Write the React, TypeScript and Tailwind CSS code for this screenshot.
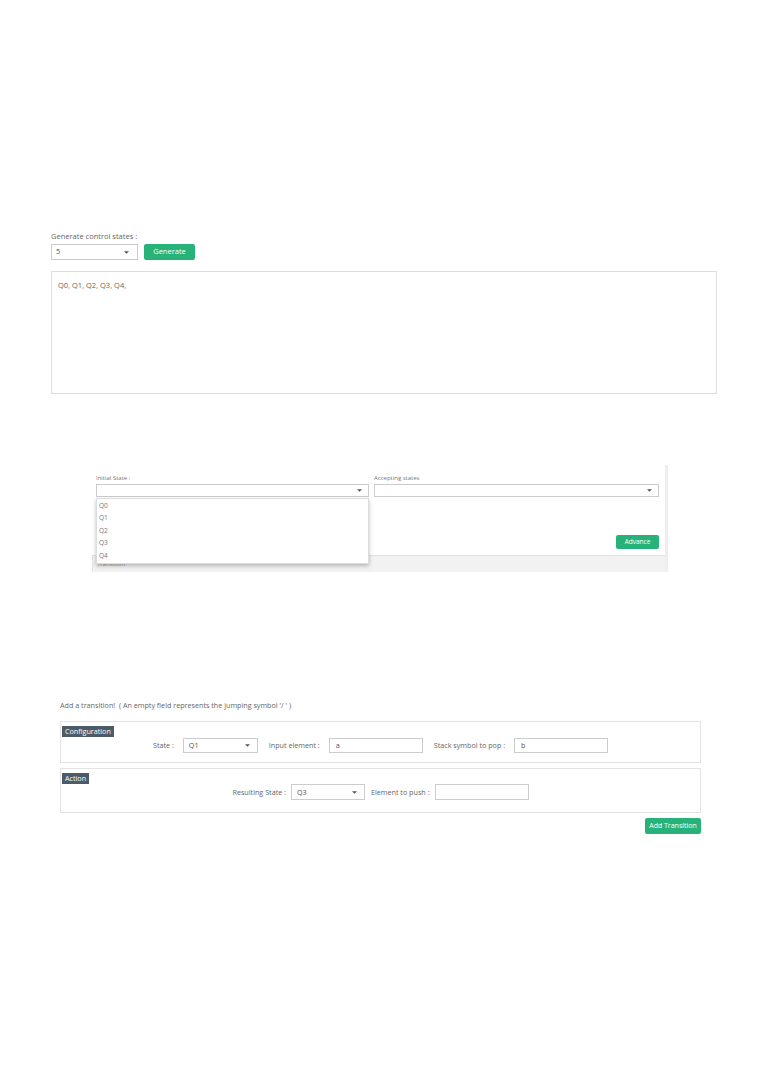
import React from "react";

const green = "bg-[#27b27a]";

function Caret() {
  return (
    <svg width={5} height={3} viewBox="0 0 8 4" className="shrink-0">
      <path d="M0 0 L8 0 L4 4 Z" fill="#555" />
    </svg>
  );
}

function Select({ value, className }: { value?: string; className: string }) {
  return (
    <div className={`flex items-center justify-between border border-[#ccc] bg-white ${className}`}>
      <span>{value}</span>
      <Caret />
    </div>
  );
}

function Field({ value, className }: { value?: string; className: string }) {
  return (
    <div className={`flex items-center border border-[#ccc] bg-white px-[6px] text-[#555] ${className}`}>
      {value}
    </div>
  );
}

function Badge({ children }: { children: React.ReactNode }) {
  return (
    <div className="ml-px mt-[4px] inline-flex h-[11px] items-center bg-[#4b5c68] px-[3px] text-[7.2px] leading-none text-white">
      {children}
    </div>
  );
}

export default function App() {
  return (
    <div className="h-[1075px] w-[761px] overflow-hidden bg-white font-['Open_Sans',sans-serif]">
      {/* Generate states */}
      <section className="pl-[51px] pr-[44px] pt-[231px]">
        <p className="text-[7.5px] leading-[10px] text-[#666]">Generate control states :</p>
        <div className="mt-[3px] flex items-center gap-[6px]">
          <Select value="5" className="h-[16px] w-[87px] px-[4px] text-[7.5px] text-[#555] [&>svg]:mr-[4px]" />
          <button className={`${green} h-[16px] w-[51px] rounded-[2px] text-[7.5px] text-white`}>Generate</button>
        </div>
        <div className="mt-[11px] h-[123px] border border-[#ddd] px-[6px] pt-[8px] text-[7.5px] text-[#666]">
          Q0, Q1, Q2, Q3, Q4,
        </div>
      </section>

      {/* Initial / accepting states */}
      <section className="ml-[92px] mt-[71px] w-[576px]">
        <div className="relative flex h-[107px] flex-col border-r-[3px] border-[#eee]">
          <div className="grid grid-cols-[273px_285px] gap-[5px] pl-[4px] pt-[9px]">
            <div>
              <p className="text-[6px] leading-[9px] text-[#777]">Initial State :</p>
              <Select className="mt-[1px] h-[13px] px-[4px] [&>svg]:mr-[2px]" />
            </div>
            <div>
              <p className="text-[6px] leading-[9px] text-[#777]">Accepting states</p>
              <Select className="mt-[1px] h-[13px] px-[4px] [&>svg]:mr-[2px]" />
            </div>
          </div>
          <div className="mt-[38px] flex justify-end pr-[6px]">
            <button className={`${green} h-[14px] w-[43px] rounded-[2px] text-[6.5px] text-white`}>Advance</button>
          </div>
          <div className="mt-auto h-[17px] border-l border-t border-[#e2e2e2] bg-[#f2f2f2] pl-[4px] pt-[4px] text-[6px] text-[#999]">
            Transition
          </div>
          <ul className="absolute left-[4px] top-[33px] w-[273px] border border-[#ddd] bg-white py-[1px] text-[6.5px] text-[#777] shadow-[0_2px_4px_rgba(0,0,0,0.25)]">
            {["Q0", "Q1", "Q2", "Q3", "Q4"].map((q) => (
              <li key={q} className="h-[12.4px] pl-[2px] leading-[12px]">
                {q}
              </li>
            ))}
          </ul>
        </div>
      </section>

      {/* Add a transition */}
      <section className="ml-[60px] mt-[128px] w-[641px] text-[7.2px] text-[#666]">
        <p className="leading-[10px]">Add a transition!&nbsp; ( An empty field represents the jumping symbol '/ ' )</p>
        <div className="mt-[11px] h-[42px] border border-[#e3e3e3]">
          <Badge>Configuration</Badge>
          <div className="mt-[1px] flex items-center justify-center">
            <span className="mr-[9px]">State :</span>
            <Select value="Q1" className="h-[15px] w-[75px] px-[5px] text-[#555] [&>svg]:mr-[2px]" />
            <span className="ml-[11px] mr-[9px]">Input element :</span>
            <Field value="a" className="h-[15px] w-[94px]" />
            <span className="ml-[11px] mr-[9px]">Stack symbol to pop :</span>
            <Field value="b" className="h-[15px] w-[94px]" />
          </div>
        </div>
        <div className="mt-[5px] h-[45px] border border-[#e3e3e3]">
          <Badge>Action</Badge>
          <div className="flex items-center justify-center">
            <span className="mr-[5px]">Resulting State :</span>
            <Select value="Q3" className="h-[16px] w-[74px] px-[5px] text-[#555] [&>svg]:mr-[2px]" />
            <span className="ml-[6px] mr-[5px]">Element to push :</span>
            <Field className="h-[16px] w-[94px]" />
          </div>
        </div>
        <div className="mt-[5px] flex justify-end">
          <button className={`${green} h-[16px] w-[56px] rounded-[2px] text-[7px] text-white`}>Add Transition</button>
        </div>
      </section>
    </div>
  );
}
